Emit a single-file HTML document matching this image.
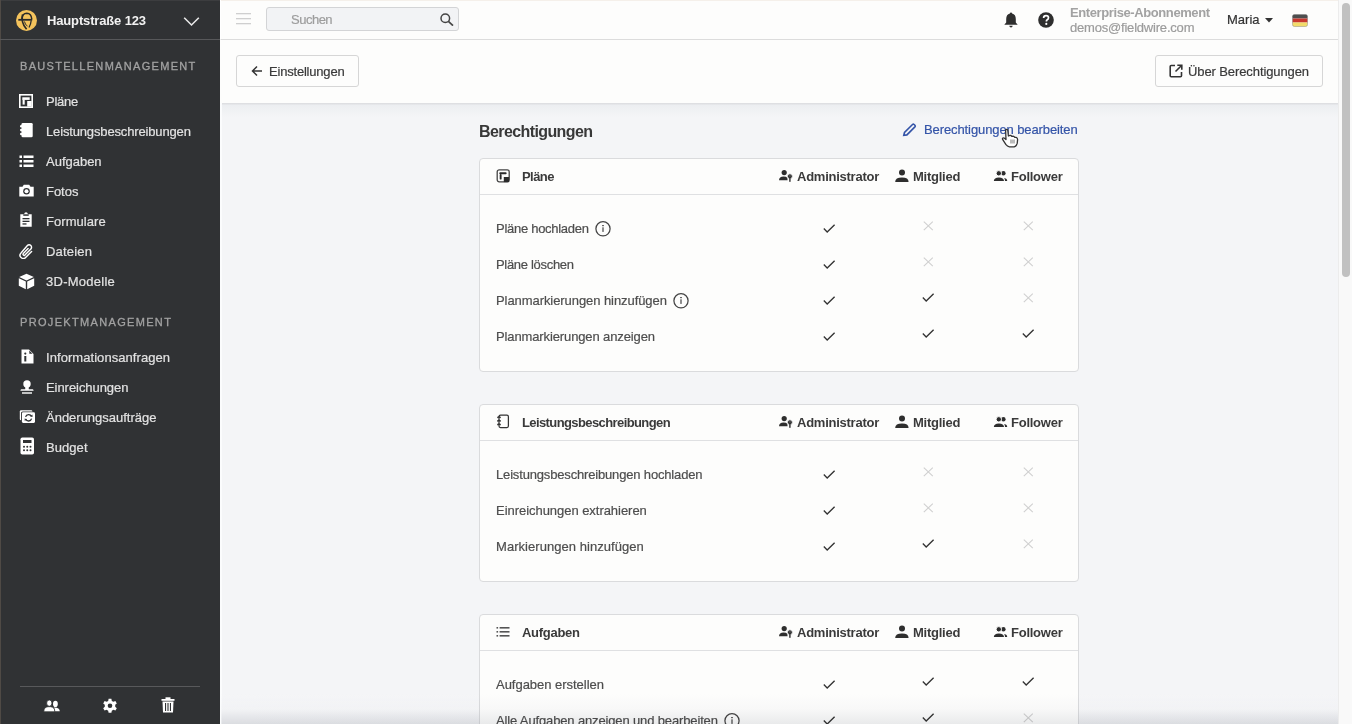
<!DOCTYPE html>
<html><head><meta charset="utf-8">
<style>
*{box-sizing:border-box;margin:0;padding:0}
html,body{width:1352px;height:724px;overflow:hidden;background:#f4f5f7;font-family:"Liberation Sans",sans-serif;}
.abs{position:absolute}
.t{position:absolute;white-space:nowrap;line-height:16px;font-size:13px}
#side{position:absolute;left:0;top:0;width:220px;height:724px;background:#303234}
#sideb{position:absolute;left:0;top:0;width:1px;height:724px;background:#4f4a45}
#side .sep{position:absolute;left:0;top:39px;width:220px;height:1px;background:#57585a}
.lbl{position:absolute;left:20px;font-size:11px;font-weight:normal;color:#a2a2a2;letter-spacing:1.31px;-webkit-text-stroke:0.3px #a2a2a2;line-height:14px;white-space:nowrap}
.nav{position:absolute;left:0;width:220px;height:30px}
.nav svg{position:absolute;left:19px;top:8px}
.nav span{position:absolute;left:46px;top:8px;font-size:13px;line-height:16px;color:#e2e2e2;white-space:nowrap;letter-spacing:-0.2px;-webkit-text-stroke:0.2px #e2e2e2}
#top{position:absolute;left:220px;top:0;width:1118px;height:40px;background:#fdfdfc;border-bottom:1px solid #dcdcdc;border-left:1px solid #fff}
#sub{position:absolute;left:220px;top:40px;width:1118px;height:63px;background:#fdfdfc}
#subsh{position:absolute;left:220px;top:103px;width:1118px;height:14px;background:linear-gradient(#dedfe2 0px,#dedfe2 1px,#eceef1 2px,#f4f5f7 14px)}
.btn{position:absolute;top:55px;height:32px;border:1px solid #d6d6d6;border-radius:3px;background:#fdfdfc}
.card{position:absolute;left:479px;width:600px;background:#fdfdfc;border:1px solid #dadbdd;border-radius:4px}
.ch{position:relative;height:36px;border-bottom:1px solid #dfe0e2}
.ch .name{position:absolute;left:42px;top:10px;font-weight:bold;font-size:13px;line-height:16px;color:#3a3a3a;letter-spacing:-0.1px}
.col{position:absolute;top:10px;font-weight:bold;font-size:13px;line-height:16px;color:#3a3a3a;letter-spacing:-0.25px;white-space:nowrap}
.cb{padding:16px 0}
.row{position:relative;height:36px}
.row .txt{position:absolute;left:16px;top:10px;font-size:13px;line-height:16px;color:#4e4e4e;white-space:nowrap;-webkit-text-stroke:0.2px #4e4e4e}
.ck{position:absolute;top:13px}
.xx{position:absolute;top:11px}
.ic{position:absolute}
.info{display:inline-block;vertical-align:top;margin-left:6px;position:relative;top:-1px}
#fade{position:absolute;left:221px;top:692px;width:1117px;height:32px;background:linear-gradient(rgba(255,255,255,0) 0%,rgba(255,255,255,0.3) 55%,rgba(230,231,234,0.45) 100%)}
#scroll{position:absolute;left:1338px;top:0;width:14px;height:724px;background:#f9f9f9;border-left:1px solid #ececec}
#thumb{position:absolute;left:1342px;top:3px;width:8px;height:274px;border-radius:4px;background:#c1c1c1}
</style></head><body>

<!-- SIDEBAR -->
<div id="side">
  <div id="sideb"></div>
  <svg class="abs" style="left:15px;top:9px" width="23" height="23" viewBox="15 9 23 23">
    <circle cx="26.5" cy="20.4" r="10.5" fill="#f4c35c"/>
    <path d="M21.8 19.2 Q22.3 13.3 26.8 13.2 Q31.3 13.3 31.8 19.2" fill="none" stroke="#2a2a2a" stroke-width="1.5"/>
    <path d="M18.3 19.8 H32.2" stroke="#2a2a2a" stroke-width="1.8"/>
    <path d="M22.6 14.5 Q20.6 22.5 26.6 29.3" fill="none" stroke="#2a2a2a" stroke-width="1.7"/>
    <path d="M31.2 20.5 Q30.8 24.5 29 27.5" fill="none" stroke="#2a2a2a" stroke-width="1.3"/>
    <path d="M24.5 21.5 Q25 25 27.5 26" fill="none" stroke="#2a2a2a" stroke-width="1"/>
  </svg>
  <div class="t" style="left:47px;top:13px;font-weight:bold;color:#f2f2f2;letter-spacing:-0.15px">Hauptstraße 123</div>
  <svg class="abs" style="left:183px;top:16px" width="17" height="11" viewBox="0 0 17 11"><path d="M1.2 1.8 L8.5 9 L15.8 1.8" fill="none" stroke="#e8e8e8" stroke-width="1.6"/></svg>
  <div class="sep"></div>

  <div class="lbl" style="top:59px">BAUSTELLENMANAGEMENT</div>

  <div class="nav" style="top:86px">
    <svg width="14" height="14" viewBox="0 0 14 14"><rect x="0" y="0" width="14" height="14" fill="#fff"/><rect x="1.6" y="1.6" width="10.8" height="10.8" fill="#303234"/><rect x="3.3" y="3.3" width="7.4" height="2.6" fill="#fff"/><rect x="3.6" y="5.5" width="2.1" height="5.1" fill="#fff"/><rect x="8.2" y="7" width="4.5" height="5.6" fill="#fff"/></svg>
    <span style="letter-spacing:-0.26px">Pläne</span>
  </div>
  <div class="nav" style="top:116px">
    <svg width="15" height="15" viewBox="0 0 15 15" style="top:7px"><rect x="2.5" y="0" width="11.2" height="14.2" rx="1.3" fill="#fff"/><circle cx="2.3" cy="3.2" r="1.3" fill="#fff"/><circle cx="2.3" cy="7.1" r="1.3" fill="#fff"/><circle cx="2.3" cy="11" r="1.3" fill="#fff"/></svg>
    <span style="letter-spacing:-0.15px">Leistungsbeschreibungen</span>
  </div>
  <div class="nav" style="top:146px">
    <svg width="15" height="15" viewBox="0 0 15 15"><rect x="0.5" y="1.5" width="2.5" height="2.5" fill="#fff"/><rect x="0.5" y="6" width="2.5" height="2.5" fill="#fff"/><rect x="0.5" y="10.5" width="2.5" height="2.5" fill="#fff"/><rect x="4.5" y="1.5" width="10" height="2.5" fill="#fff"/><rect x="4.5" y="6" width="10" height="2.5" fill="#fff"/><rect x="4.5" y="10.5" width="10" height="2.5" fill="#fff"/></svg>
    <span style="letter-spacing:-0.01px">Aufgaben</span>
  </div>
  <div class="nav" style="top:176px">
    <svg width="15" height="15" viewBox="0 0 15 15"><path d="M0.3 2.8 H3.5 L4.8 0.8 H10.2 L11.5 2.8 H14.7 V12.6 H0.3 Z" fill="#fff"/><circle cx="7.5" cy="7.3" r="3.3" fill="#303234"/><circle cx="7.5" cy="7.3" r="2" fill="#fff"/></svg>
    <span style="letter-spacing:-0.03px">Fotos</span>
  </div>
  <div class="nav" style="top:206px">
    <svg width="15" height="15" viewBox="0 0 15 15" style="top:6px"><path d="M1.3 2.3 H5 Q5.5 0.3 7 0.3 Q8.5 0.3 9 2.3 H12.7 V14.8 H1.3 Z" fill="#fff"/><rect x="4.3" y="2.3" width="5.4" height="1.5" fill="#303234"/><rect x="3.5" y="6" width="7" height="1.3" fill="#303234"/><rect x="3.5" y="8.7" width="7" height="1.3" fill="#303234"/><rect x="3.5" y="11.3" width="4" height="1.3" fill="#303234"/></svg>
    <span style="letter-spacing:0.06px">Formulare</span>
  </div>
  <div class="nav" style="top:236px">
    <svg width="16" height="16" viewBox="18 243 16 16" style="left:18px;top:7px"><path d="M31.6 251.6 L25.6 257.4 A3.2 3.2 0 0 1 21 252.9 L27.4 245.6 A2.4 2.4 0 0 1 30.9 248.9 L24.9 255.1 A1.1 1.1 0 0 1 23.3 253.6 L28.1 248.6" fill="none" stroke="#fff" stroke-width="1.45" stroke-linecap="round"/></svg>
    <span style="letter-spacing:0.2px">Dateien</span>
  </div>
  <div class="nav" style="top:266px">
    <svg width="17" height="17" viewBox="0 0 17 17" style="left:18px;top:7px"><path d="M8.5 0.8 L15.8 4 L8.5 7.4 L1.2 4 Z" fill="#fff"/><path d="M0.8 5.2 L7.8 8.5 V16.2 L0.8 12.8 Z" fill="#fff"/><path d="M16.2 5.2 L9.2 8.5 V16.2 L16.2 12.8 Z" fill="#fff"/></svg>
    <span style="letter-spacing:0.26px">3D-Modelle</span>
  </div>

  <div class="lbl" style="top:315px;letter-spacing:1.33px">PROJEKTMANAGEMENT</div>

  <div class="nav" style="top:342px">
    <svg width="15" height="15" viewBox="0 0 15 15" style="left:20px;top:7px"><path d="M1.5 0.5 H9 L13.5 5 V14.5 H1.5 Z" fill="#fff"/><path d="M9 0.5 V5 H13.5" fill="#303234" opacity="0.0"/><path d="M9.3 1.5 L12.5 4.7 H9.3 Z" fill="#303234"/><rect x="4.3" y="7" width="2" height="5.5" fill="#303234"/><circle cx="5.3" cy="4.6" r="1.1" fill="#303234"/></svg>
    <span style="letter-spacing:0.06px">Informationsanfragen</span>
  </div>
  <div class="nav" style="top:372px">
    <svg width="15" height="15" viewBox="0 0 15 15" style="left:20px;top:8px"><circle cx="7" cy="4" r="3.7" fill="#fff"/><path d="M5.4 6 H8.6 L8.8 9.3 H12.6 Q13.6 9.3 13.6 10.8 H0.4 Q0.4 9.3 1.4 9.3 H5.2 Z" fill="#fff"/><rect x="2" y="12.3" width="10" height="1.4" fill="#fff"/></svg>
    <span style="letter-spacing:-0.06px">Einreichungen</span>
  </div>
  <div class="nav" style="top:402px">
    <svg width="17" height="15" viewBox="19 409 17 15" style="left:19px;top:7px"><rect x="19.8" y="410.2" width="12.6" height="10" rx="1.3" fill="#fff"/><rect x="21" y="411.4" width="14.6" height="12.2" rx="1.6" fill="#303234"/><rect x="21.9" y="412.3" width="13.1" height="10.6" rx="1.3" fill="#fff"/><path d="M31.5 416.6 A3.1 3.1 0 0 0 25.6 416.9" fill="none" stroke="#303234" stroke-width="1.3"/><path d="M25.7 419 A3.1 3.1 0 0 0 31.6 418.7" fill="none" stroke="#303234" stroke-width="1.3"/><path d="M30.2 416.3 L32.6 417 L32.4 414.6 Z" fill="#303234"/><path d="M27 419.3 L24.6 418.6 L24.8 421 Z" fill="#303234"/></svg>
    <span style="letter-spacing:-0.01px">Änderungsaufträge</span>
  </div>
  <div class="nav" style="top:432px">
    <svg width="15" height="18" viewBox="0 0 15 18" style="left:20px;top:5px"><rect x="0.5" y="0.5" width="13.5" height="17" rx="1.8" fill="#fff"/><rect x="3" y="3" width="8.5" height="3" fill="#303234"/><circle cx="4" cy="9.8" r="1" fill="#303234"/><circle cx="7.25" cy="9.8" r="1" fill="#303234"/><circle cx="10.5" cy="9.8" r="1" fill="#303234"/><circle cx="4" cy="13.3" r="1" fill="#303234"/><circle cx="7.25" cy="13.3" r="1" fill="#303234"/><circle cx="10.5" cy="13.3" r="1" fill="#303234"/></svg>
    <span style="letter-spacing:0.06px">Budget</span>
  </div>

  <div class="abs" style="left:20px;top:686px;width:180px;height:1px;background:#58595b"></div>
  <svg class="abs" style="left:43px;top:699px" width="18" height="14" viewBox="0 0 18 14"><ellipse cx="12.4" cy="4.9" rx="2.4" ry="3.1" fill="#fff"/><path d="M11.2 8.4 Q16.8 8.6 16.8 12.2 H12 Q12 9.8 11 9 Z" fill="#fff"/><ellipse cx="6.3" cy="4.1" rx="2.7" ry="3.2" fill="#fff" stroke="#303234" stroke-width="0.9"/><path d="M0.8 12.8 Q0.8 7.9 5 7.7 H7.6 Q11.8 7.9 11.8 12.8 Z" fill="#fff" stroke="#303234" stroke-width="0.8"/></svg>
  <svg class="abs" style="left:102px;top:698px" width="16" height="16" viewBox="0 0 16 16"><path d="M6.6 0.8 H9.4 L9.8 2.9 L11.4 3.8 L13.4 3 L14.8 5.4 L13.2 6.8 V8.8 L14.8 10.2 L13.4 12.6 L11.4 11.8 L9.8 12.7 L9.4 14.8 H6.6 L6.2 12.7 L4.6 11.8 L2.6 12.6 L1.2 10.2 L2.8 8.8 V6.8 L1.2 5.4 L2.6 3 L4.6 3.8 L6.2 2.9 Z" fill="#fff"/><circle cx="8" cy="7.8" r="2.3" fill="#303234"/></svg>
  <svg class="abs" style="left:161px;top:697px" width="14" height="16" viewBox="0 0 14 16"><rect x="0.5" y="2" width="13" height="1.8" fill="#fff"/><rect x="4.5" y="0.3" width="5" height="2" fill="#fff"/><path d="M1.5 4.5 H12.5 L12 15.5 H2 Z" fill="#fff"/><rect x="4" y="6" width="1.1" height="8" fill="#303234"/><rect x="6.45" y="6" width="1.1" height="8" fill="#303234"/><rect x="8.9" y="6" width="1.1" height="8" fill="#303234"/></svg>
</div>

<!-- TOP BAR -->
<div id="top">
  <svg class="abs" style="left:15px;top:13px" width="16" height="12" viewBox="0 0 16 12"><rect x="0" y="0" width="15" height="1.3" fill="#cfcfcf"/><rect x="0" y="5" width="15" height="1.3" fill="#cfcfcf"/><rect x="0" y="10" width="15" height="1.3" fill="#cfcfcf"/></svg>
  <div class="abs" style="left:45px;top:7px;width:193px;height:24px;background:#f2f3f5;border:1px solid #d3d4d6;border-radius:3px"></div>
  <div class="t" style="-webkit-text-stroke-width:0.2px;left:70px;top:12px;color:#9d9d9d;letter-spacing:-0.5px">Suchen</div>
  <svg class="abs" style="left:219px;top:13px" width="14" height="13" viewBox="0 0 14 13"><circle cx="5.3" cy="5.3" r="4.3" fill="none" stroke="#444" stroke-width="1.5"/><path d="M8.4 8.4 L13 12.6" stroke="#444" stroke-width="1.7"/></svg>

  <svg class="abs" style="left:782px;top:12px" width="16" height="16" viewBox="0 0 15 16"><path d="M7.5 0.5 Q8.6 0.5 8.6 1.6 Q12.3 2.5 12.3 7 V10.5 L14.2 12.8 H0.8 L2.7 10.5 V7 Q2.7 2.5 6.4 1.6 Q6.4 0.5 7.5 0.5 Z" fill="#2e2e2e"/><path d="M5.8 13.8 H9.2 Q9 15.6 7.5 15.6 Q6 15.6 5.8 13.8 Z" fill="#2e2e2e"/></svg>
  <svg class="abs" style="left:817px;top:12px" width="16" height="16" viewBox="0 0 16 16"><circle cx="8" cy="8" r="7.8" fill="#2e2e2e"/><path d="M5.6 6 Q5.6 3.6 8 3.6 Q10.5 3.6 10.5 5.8 Q10.5 7.2 9 8 Q8.4 8.4 8.4 9.4" fill="none" stroke="#fff" stroke-width="1.7"/><circle cx="8.3" cy="11.9" r="1.1" fill="#fff"/></svg>
  <div class="t" style="left:849px;top:5px;font-weight:bold;color:#a2a2a2;letter-spacing:-0.4px">Enterprise-Abonnement</div>
  <div class="t" style="-webkit-text-stroke-width:0.2px;left:849px;top:20px;color:#9c9c9c;letter-spacing:-0.2px">demos@fieldwire.com</div>
  <div class="t" style="-webkit-text-stroke-width:0.2px;left:1006px;top:12px;color:#333;">Maria</div>
  <svg class="abs" style="left:1044px;top:18px" width="8" height="5" viewBox="0 0 8 5"><path d="M0 0 H8 L4 4.5 Z" fill="#333"/></svg>
  <svg class="abs" style="left:1071px;top:14px" width="16" height="13" viewBox="0 0 16 13"><clipPath id="fc"><rect x="0.5" y="0.5" width="15" height="12" rx="1.8"/></clipPath><g clip-path="url(#fc)"><rect x="0" y="0" width="16" height="4.5" fill="#4e4e4e"/><rect x="0" y="4.5" width="16" height="4" fill="#c8382e"/><rect x="0" y="8.5" width="16" height="5" fill="#f2dc6a"/></g><rect x="0.5" y="0.5" width="15" height="12" rx="1.8" fill="none" stroke="#777" stroke-opacity="0.5" stroke-width="0.8"/></svg>
</div>

<!-- SUBHEADER -->
<div id="sub"></div>
<div id="subsh"></div>
<div class="btn" style="left:236px;width:123px"></div>
<svg class="abs" style="left:251px;top:65px" width="12" height="12" viewBox="0 0 12 12"><path d="M11 6 H1.8 M6 1.5 L1.5 6 L6 10.5" fill="none" stroke="#333" stroke-width="1.5"/></svg>
<div class="t" style="-webkit-text-stroke-width:0.2px;left:269px;top:64px;color:#3a3a3a;letter-spacing:-0.2px">Einstellungen</div>
<div class="btn" style="left:1155px;width:168px"></div>
<svg class="abs" style="left:1169px;top:64px" width="14" height="14" viewBox="0 0 14 14"><path d="M6 1.5 H2.2 Q1.2 1.5 1.2 2.5 V11.8 Q1.2 12.8 2.2 12.8 H11.5 Q12.5 12.8 12.5 11.8 V8" fill="none" stroke="#333" stroke-width="1.6"/><path d="M8.3 1.2 H12.8 V5.7 M12.8 1.2 L6.5 7.5" fill="none" stroke="#333" stroke-width="1.6"/></svg>
<div class="t" style="-webkit-text-stroke-width:0.2px;left:1188px;top:64px;color:#3a3a3a;letter-spacing:-0.1px">Über Berechtigungen</div>

<!-- MAIN -->
<div class="t" style="left:479px;top:123px;font-size:16px;line-height:18px;font-weight:bold;color:#383838;letter-spacing:-0.6px">Berechtigungen</div>
<svg class="abs" style="left:902px;top:123px" width="15" height="14" viewBox="0 0 15 14"><path d="M1.8 12.3 L2.5 9.5 L10.5 1.5 Q11.3 0.8 12.1 1.5 L12.9 2.3 Q13.6 3.1 12.9 3.9 L4.9 11.9 Z" fill="none" stroke="#3454a8" stroke-width="1.6"/></svg>
<div class="t" style="-webkit-text-stroke-width:0.2px;left:924px;top:122px;color:#3454a8;letter-spacing:-0.1px">Berechtigungen bearbeiten</div>

<svg class="abs" style="left:1001px;top:127px" width="19" height="22" viewBox="0 0 19 22"><path d="M4.6 3 Q5.6 1.6 6.8 3 L7.4 9 L9 8.4 Q10.2 8.2 10.6 9.3 L12.1 9.2 Q13.2 9.2 13.6 10.3 L15 10.3 Q16.6 10.6 16.6 12.6 L16.2 16.4 Q15.4 19.4 13.2 19.8 L8.4 19.8 Q6.3 19.4 4.8 17.3 L1.6 12.4 Q1.1 10.9 2.5 10.8 Q3.6 10.8 5 12.6 Z" fill="#fff" stroke="#333" stroke-width="1.3" stroke-linejoin="round"/><rect x="9" y="12.5" width="5" height="4" fill="#bbb"/></svg>
<div id="fade"></div>
<!--CARDS-->
<div class="card" style="top:158px">
<div class="ch"><svg class="ic" style="left:16px;top:10px" width="15" height="15" viewBox="0 0 15 15"><rect x="1.2" y="0.8" width="12" height="12" rx="2" fill="none" stroke="#444" stroke-width="1.3"/><rect x="3.3" y="3.2" width="7.3" height="2.1" rx="0.8" fill="#2a2a2a"/><rect x="3.7" y="5" width="1.9" height="5.6" rx="0.9" fill="#2a2a2a"/><rect x="7.8" y="8" width="5.3" height="5.1" fill="#2a2a2a"/></svg><div class="name" style="letter-spacing:-0.57px">Pläne</div>
<svg class="ic" style="left:298px;top:10px" width="15" height="14" viewBox="0 0 15 14"><circle cx="6.2" cy="3.6" r="2.6" fill="#2e2e2e"/><path d="M1 11.2 Q1.2 7.6 5.5 7.5 Q8.3 7.5 9.3 8.8 L9.6 11.2 Z" fill="#2e2e2e"/><circle cx="11.9" cy="7.3" r="2.5" fill="#2e2e2e" stroke="#fdfdfc" stroke-width="0.8"/><circle cx="11.9" cy="6.9" r="0.7" fill="#777"/><rect x="11.2" y="9" width="1.4" height="3.8" fill="#2e2e2e"/></svg><div class="col" style="left:317px">Administrator</div>
<svg class="ic" style="left:414px;top:10px" width="16" height="14" viewBox="0 0 16 14"><circle cx="8" cy="3.4" r="3" fill="#2e2e2e"/><path d="M1.2 12.9 Q1.2 8.6 8 8.6 Q14.6 8.6 14.6 12.9 Z" fill="#2e2e2e"/></svg><div class="col" style="left:433px">Mitglied</div>
<svg class="ic" style="left:513px;top:10px" width="16" height="14" viewBox="0 0 16 14"><circle cx="10.4" cy="4.3" r="2.2" fill="#2e2e2e"/><circle cx="5.8" cy="4.3" r="2.7" fill="#2e2e2e" stroke="#fdfdfc" stroke-width="1"/><path d="M0.8 11.9 Q1 8.4 5.9 8.4 Q10.8 8.4 11 11.9 Z" fill="#2e2e2e"/><path d="M11.6 9 Q14.3 9.4 14.3 11.9 H12 Q12 10.2 11.3 9.2 Z" fill="#2e2e2e"/></svg><div class="col" style="left:531px">Follower</div>
</div><div class="cb">
<div class="row">
<div class="txt"><span style="letter-spacing:-0.28px">Pläne hochladen</span><svg class="info" width="16" height="17" viewBox="0 0 16 17"><circle cx="8" cy="8.8" r="7.1" fill="none" stroke="#444" stroke-width="1.25"/><rect x="7.4" y="7.3" width="1.2" height="4.6" fill="#444"/><rect x="7.2" y="5" width="1.6" height="1.2" fill="#444"/></svg></div>
<svg class="ic" style="left:342.5px;top:13px" width="13" height="10" viewBox="0 0 13 10"><path d="M0.8 4.6 L4.2 8 L11.6 0.8" fill="none" stroke="#333" stroke-width="1.35"/></svg>
<svg class="ic" style="left:443.0px;top:10px" width="11" height="10" viewBox="0 0 11 10"><path d="M0.8 0.6 L9.8 9.2 M9.8 0.6 L0.8 9.2" fill="none" stroke="#d0d0d0" stroke-width="1.1"/></svg>
<svg class="ic" style="left:543.0px;top:10px" width="11" height="10" viewBox="0 0 11 10"><path d="M0.8 0.6 L9.8 9.2 M9.8 0.6 L0.8 9.2" fill="none" stroke="#d0d0d0" stroke-width="1.1"/></svg>
</div>
<div class="row">
<div class="txt"><span style="letter-spacing:-0.31px">Pläne löschen</span></div>
<svg class="ic" style="left:342.5px;top:13px" width="13" height="10" viewBox="0 0 13 10"><path d="M0.8 4.6 L4.2 8 L11.6 0.8" fill="none" stroke="#333" stroke-width="1.35"/></svg>
<svg class="ic" style="left:443.0px;top:10px" width="11" height="10" viewBox="0 0 11 10"><path d="M0.8 0.6 L9.8 9.2 M9.8 0.6 L0.8 9.2" fill="none" stroke="#d0d0d0" stroke-width="1.1"/></svg>
<svg class="ic" style="left:543.0px;top:10px" width="11" height="10" viewBox="0 0 11 10"><path d="M0.8 0.6 L9.8 9.2 M9.8 0.6 L0.8 9.2" fill="none" stroke="#d0d0d0" stroke-width="1.1"/></svg>
</div>
<div class="row">
<div class="txt"><span style="letter-spacing:-0.07px">Planmarkierungen hinzufügen</span><svg class="info" width="16" height="17" viewBox="0 0 16 17"><circle cx="8" cy="8.8" r="7.1" fill="none" stroke="#444" stroke-width="1.25"/><rect x="7.4" y="7.3" width="1.2" height="4.6" fill="#444"/><rect x="7.2" y="5" width="1.6" height="1.2" fill="#444"/></svg></div>
<svg class="ic" style="left:342.5px;top:13px" width="13" height="10" viewBox="0 0 13 10"><path d="M0.8 4.6 L4.2 8 L11.6 0.8" fill="none" stroke="#333" stroke-width="1.35"/></svg>
<svg class="ic" style="left:442.0px;top:10px" width="13" height="10" viewBox="0 0 13 10"><path d="M0.8 4.6 L4.2 8 L11.6 0.8" fill="none" stroke="#333" stroke-width="1.35"/></svg>
<svg class="ic" style="left:543.0px;top:10px" width="11" height="10" viewBox="0 0 11 10"><path d="M0.8 0.6 L9.8 9.2 M9.8 0.6 L0.8 9.2" fill="none" stroke="#d0d0d0" stroke-width="1.1"/></svg>
</div>
<div class="row">
<div class="txt"><span style="letter-spacing:-0.12px">Planmarkierungen anzeigen</span></div>
<svg class="ic" style="left:342.5px;top:13px" width="13" height="10" viewBox="0 0 13 10"><path d="M0.8 4.6 L4.2 8 L11.6 0.8" fill="none" stroke="#333" stroke-width="1.35"/></svg>
<svg class="ic" style="left:442.0px;top:10px" width="13" height="10" viewBox="0 0 13 10"><path d="M0.8 4.6 L4.2 8 L11.6 0.8" fill="none" stroke="#333" stroke-width="1.35"/></svg>
<svg class="ic" style="left:542.0px;top:10px" width="13" height="10" viewBox="0 0 13 10"><path d="M0.8 4.6 L4.2 8 L11.6 0.8" fill="none" stroke="#333" stroke-width="1.35"/></svg>
</div>
</div></div>
<div class="card" style="top:404px">
<div class="ch"><svg class="ic" style="left:16px;top:9px" width="14" height="16" viewBox="0 0 14 16"><rect x="3" y="1.2" width="9.4" height="12.3" rx="1.5" fill="none" stroke="#333" stroke-width="1.25"/><path d="M1.3 3.6 L3 2.8 L4.7 3.6 M1.3 7.2 L3 6.4 L4.7 7.2 M1.3 10.8 L3 10 L4.7 10.8" fill="none" stroke="#333" stroke-width="1.5"/></svg><div class="name" style="letter-spacing:-0.6px">Leistungsbeschreibungen</div>
<svg class="ic" style="left:298px;top:10px" width="15" height="14" viewBox="0 0 15 14"><circle cx="6.2" cy="3.6" r="2.6" fill="#2e2e2e"/><path d="M1 11.2 Q1.2 7.6 5.5 7.5 Q8.3 7.5 9.3 8.8 L9.6 11.2 Z" fill="#2e2e2e"/><circle cx="11.9" cy="7.3" r="2.5" fill="#2e2e2e" stroke="#fdfdfc" stroke-width="0.8"/><circle cx="11.9" cy="6.9" r="0.7" fill="#777"/><rect x="11.2" y="9" width="1.4" height="3.8" fill="#2e2e2e"/></svg><div class="col" style="left:317px">Administrator</div>
<svg class="ic" style="left:414px;top:10px" width="16" height="14" viewBox="0 0 16 14"><circle cx="8" cy="3.4" r="3" fill="#2e2e2e"/><path d="M1.2 12.9 Q1.2 8.6 8 8.6 Q14.6 8.6 14.6 12.9 Z" fill="#2e2e2e"/></svg><div class="col" style="left:433px">Mitglied</div>
<svg class="ic" style="left:513px;top:10px" width="16" height="14" viewBox="0 0 16 14"><circle cx="10.4" cy="4.3" r="2.2" fill="#2e2e2e"/><circle cx="5.8" cy="4.3" r="2.7" fill="#2e2e2e" stroke="#fdfdfc" stroke-width="1"/><path d="M0.8 11.9 Q1 8.4 5.9 8.4 Q10.8 8.4 11 11.9 Z" fill="#2e2e2e"/><path d="M11.6 9 Q14.3 9.4 14.3 11.9 H12 Q12 10.2 11.3 9.2 Z" fill="#2e2e2e"/></svg><div class="col" style="left:531px">Follower</div>
</div><div class="cb">
<div class="row">
<div class="txt"><span style="letter-spacing:-0.165px">Leistungsbeschreibungen hochladen</span></div>
<svg class="ic" style="left:342.5px;top:13px" width="13" height="10" viewBox="0 0 13 10"><path d="M0.8 4.6 L4.2 8 L11.6 0.8" fill="none" stroke="#333" stroke-width="1.35"/></svg>
<svg class="ic" style="left:443.0px;top:10px" width="11" height="10" viewBox="0 0 11 10"><path d="M0.8 0.6 L9.8 9.2 M9.8 0.6 L0.8 9.2" fill="none" stroke="#d0d0d0" stroke-width="1.1"/></svg>
<svg class="ic" style="left:543.0px;top:10px" width="11" height="10" viewBox="0 0 11 10"><path d="M0.8 0.6 L9.8 9.2 M9.8 0.6 L0.8 9.2" fill="none" stroke="#d0d0d0" stroke-width="1.1"/></svg>
</div>
<div class="row">
<div class="txt"><span style="letter-spacing:-0.04px">Einreichungen extrahieren</span></div>
<svg class="ic" style="left:342.5px;top:13px" width="13" height="10" viewBox="0 0 13 10"><path d="M0.8 4.6 L4.2 8 L11.6 0.8" fill="none" stroke="#333" stroke-width="1.35"/></svg>
<svg class="ic" style="left:443.0px;top:10px" width="11" height="10" viewBox="0 0 11 10"><path d="M0.8 0.6 L9.8 9.2 M9.8 0.6 L0.8 9.2" fill="none" stroke="#d0d0d0" stroke-width="1.1"/></svg>
<svg class="ic" style="left:543.0px;top:10px" width="11" height="10" viewBox="0 0 11 10"><path d="M0.8 0.6 L9.8 9.2 M9.8 0.6 L0.8 9.2" fill="none" stroke="#d0d0d0" stroke-width="1.1"/></svg>
</div>
<div class="row">
<div class="txt"><span style="letter-spacing:0.05px">Markierungen hinzufügen</span></div>
<svg class="ic" style="left:342.5px;top:13px" width="13" height="10" viewBox="0 0 13 10"><path d="M0.8 4.6 L4.2 8 L11.6 0.8" fill="none" stroke="#333" stroke-width="1.35"/></svg>
<svg class="ic" style="left:442.0px;top:10px" width="13" height="10" viewBox="0 0 13 10"><path d="M0.8 4.6 L4.2 8 L11.6 0.8" fill="none" stroke="#333" stroke-width="1.35"/></svg>
<svg class="ic" style="left:543.0px;top:10px" width="11" height="10" viewBox="0 0 11 10"><path d="M0.8 0.6 L9.8 9.2 M9.8 0.6 L0.8 9.2" fill="none" stroke="#d0d0d0" stroke-width="1.1"/></svg>
</div>
</div></div>
<div class="card" style="top:614px">
<div class="ch"><svg class="ic" style="left:16px;top:11px" width="15" height="12" viewBox="0 0 15 12"><rect x="0.5" y="1" width="1.6" height="1.6" fill="#555"/><rect x="0.5" y="5" width="1.6" height="1.6" fill="#555"/><rect x="0.5" y="9" width="1.6" height="1.6" fill="#555"/><rect x="3.6" y="1" width="9.9" height="1.6" fill="#555"/><rect x="3.6" y="5" width="9.9" height="1.6" fill="#555"/><rect x="3.6" y="9" width="9.9" height="1.6" fill="#555"/></svg><div class="name" style="letter-spacing:-0.28px">Aufgaben</div>
<svg class="ic" style="left:298px;top:10px" width="15" height="14" viewBox="0 0 15 14"><circle cx="6.2" cy="3.6" r="2.6" fill="#2e2e2e"/><path d="M1 11.2 Q1.2 7.6 5.5 7.5 Q8.3 7.5 9.3 8.8 L9.6 11.2 Z" fill="#2e2e2e"/><circle cx="11.9" cy="7.3" r="2.5" fill="#2e2e2e" stroke="#fdfdfc" stroke-width="0.8"/><circle cx="11.9" cy="6.9" r="0.7" fill="#777"/><rect x="11.2" y="9" width="1.4" height="3.8" fill="#2e2e2e"/></svg><div class="col" style="left:317px">Administrator</div>
<svg class="ic" style="left:414px;top:10px" width="16" height="14" viewBox="0 0 16 14"><circle cx="8" cy="3.4" r="3" fill="#2e2e2e"/><path d="M1.2 12.9 Q1.2 8.6 8 8.6 Q14.6 8.6 14.6 12.9 Z" fill="#2e2e2e"/></svg><div class="col" style="left:433px">Mitglied</div>
<svg class="ic" style="left:513px;top:10px" width="16" height="14" viewBox="0 0 16 14"><circle cx="10.4" cy="4.3" r="2.2" fill="#2e2e2e"/><circle cx="5.8" cy="4.3" r="2.7" fill="#2e2e2e" stroke="#fdfdfc" stroke-width="1"/><path d="M0.8 11.9 Q1 8.4 5.9 8.4 Q10.8 8.4 11 11.9 Z" fill="#2e2e2e"/><path d="M11.6 9 Q14.3 9.4 14.3 11.9 H12 Q12 10.2 11.3 9.2 Z" fill="#2e2e2e"/></svg><div class="col" style="left:531px">Follower</div>
</div><div class="cb">
<div class="row">
<div class="txt"><span style="letter-spacing:-0.025px">Aufgaben erstellen</span></div>
<svg class="ic" style="left:342.5px;top:13px" width="13" height="10" viewBox="0 0 13 10"><path d="M0.8 4.6 L4.2 8 L11.6 0.8" fill="none" stroke="#333" stroke-width="1.35"/></svg>
<svg class="ic" style="left:442.0px;top:10px" width="13" height="10" viewBox="0 0 13 10"><path d="M0.8 4.6 L4.2 8 L11.6 0.8" fill="none" stroke="#333" stroke-width="1.35"/></svg>
<svg class="ic" style="left:542.0px;top:10px" width="13" height="10" viewBox="0 0 13 10"><path d="M0.8 4.6 L4.2 8 L11.6 0.8" fill="none" stroke="#333" stroke-width="1.35"/></svg>
</div>
<div class="row">
<div class="txt"><span style="letter-spacing:-0.14px">Alle Aufgaben anzeigen und bearbeiten</span><svg class="info" width="16" height="17" viewBox="0 0 16 17"><circle cx="8" cy="8.8" r="7.1" fill="none" stroke="#444" stroke-width="1.25"/><rect x="7.4" y="7.3" width="1.2" height="4.6" fill="#444"/><rect x="7.2" y="5" width="1.6" height="1.2" fill="#444"/></svg></div>
<svg class="ic" style="left:342.5px;top:13px" width="13" height="10" viewBox="0 0 13 10"><path d="M0.8 4.6 L4.2 8 L11.6 0.8" fill="none" stroke="#333" stroke-width="1.35"/></svg>
<svg class="ic" style="left:442.0px;top:10px" width="13" height="10" viewBox="0 0 13 10"><path d="M0.8 4.6 L4.2 8 L11.6 0.8" fill="none" stroke="#333" stroke-width="1.35"/></svg>
<svg class="ic" style="left:543.0px;top:10px" width="11" height="10" viewBox="0 0 11 10"><path d="M0.8 0.6 L9.8 9.2 M9.8 0.6 L0.8 9.2" fill="none" stroke="#d0d0d0" stroke-width="1.1"/></svg>
</div>
<div class="row">
<div class="txt"><span style="letter-spacing:0px">Aufgaben löschen</span></div>
<svg class="ic" style="left:342.5px;top:13px" width="13" height="10" viewBox="0 0 13 10"><path d="M0.8 4.6 L4.2 8 L11.6 0.8" fill="none" stroke="#333" stroke-width="1.35"/></svg>
<svg class="ic" style="left:443.0px;top:10px" width="11" height="10" viewBox="0 0 11 10"><path d="M0.8 0.6 L9.8 9.2 M9.8 0.6 L0.8 9.2" fill="none" stroke="#d0d0d0" stroke-width="1.1"/></svg>
<svg class="ic" style="left:543.0px;top:10px" width="11" height="10" viewBox="0 0 11 10"><path d="M0.8 0.6 L9.8 9.2 M9.8 0.6 L0.8 9.2" fill="none" stroke="#d0d0d0" stroke-width="1.1"/></svg>
</div>
</div></div>
<!--/CARDS-->

<div class="abs" style="left:220px;top:103px;width:2px;height:621px;background:#fbfcfd"></div>
<div class="abs" style="left:221px;top:694px;width:1117px;height:30px;mix-blend-mode:multiply;background:linear-gradient(#ffffff,#fafafb 50%,#ebecee)"></div>
<div class="abs" style="left:221px;top:0;width:1117px;height:1px;background:#f5f0ea"></div>
<div class="abs" style="left:1px;top:0;width:219px;height:1px;background:#3c3d3f"></div>
<div id="scroll"></div>
<div id="thumb"></div>
</body></html>
